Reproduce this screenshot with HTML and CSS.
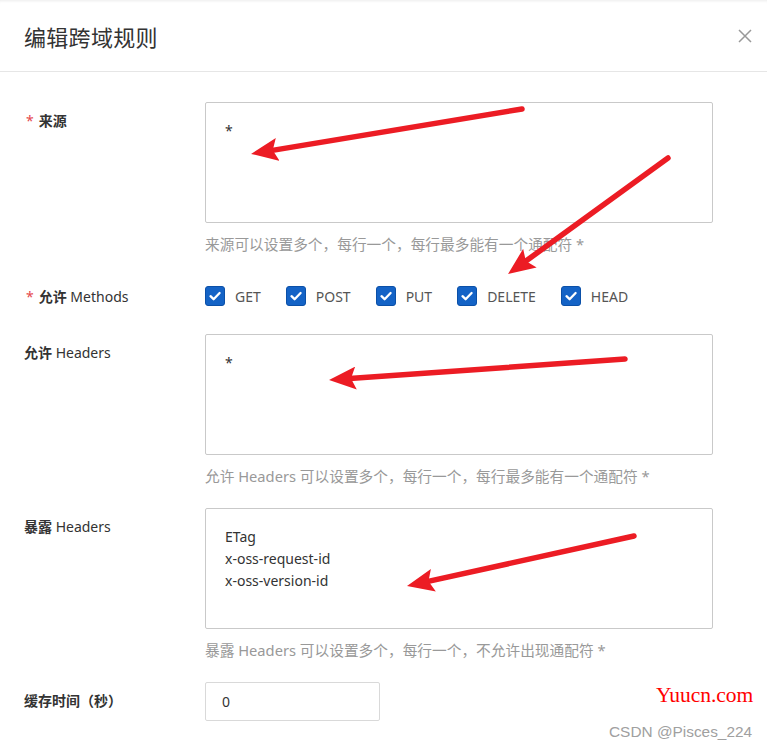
FILE: index.html
```html
<!DOCTYPE html>
<html lang="zh-CN">

<head>
    <meta charset="UTF-8">
    <meta name="viewport" content="width=device-width, initial-scale=1.0">
    <title>编辑跨域规则</title>
    <link rel="stylesheet" href="styles.css">
</head>

<body>
    <div class="dialog">
        <div class="dialog-header">
            <h2>编辑跨域规则</h2>
            <button class="close" aria-label="关闭">
                <svg width="14" height="14" viewBox="0 0 14 14">
                    <path d="M1 1 L13 13 M13 1 L1 13" stroke="#999" stroke-width="1.5" fill="none" />
                </svg>
            </button>
        </div>

        <div class="dialog-body">
            <!-- 来源 -->
            <div class="form-row">
                <div class="form-label"><span class="req">*</span><b>来源</b></div>
                <div class="form-control">
                    <textarea class="area">*</textarea>
                    <div class="help">来源可以设置多个，每行一个，每行最多能有一个通配符 *</div>
                </div>
            </div>

            <!-- 方法 -->
            <div class="form-row row-methods">
                <div class="form-label"><span class="req">*</span><b>允许</b> Methods</div>
                <div class="form-control methods">
                    <label class="check"><span class="box"><svg width="20" height="20" viewBox="0 0 20 20"><path d="M5.5 10.2 L8.6 13.2 L14.6 7" /></svg></span>GET</label>
                    <label class="check"><span class="box"><svg width="20" height="20" viewBox="0 0 20 20"><path d="M5.5 10.2 L8.6 13.2 L14.6 7" /></svg></span>POST</label>
                    <label class="check"><span class="box"><svg width="20" height="20" viewBox="0 0 20 20"><path d="M5.5 10.2 L8.6 13.2 L14.6 7" /></svg></span>PUT</label>
                    <label class="check"><span class="box"><svg width="20" height="20" viewBox="0 0 20 20"><path d="M5.5 10.2 L8.6 13.2 L14.6 7" /></svg></span>DELETE</label>
                    <label class="check"><span class="box"><svg width="20" height="20" viewBox="0 0 20 20"><path d="M5.5 10.2 L8.6 13.2 L14.6 7" /></svg></span>HEAD</label>
                </div>
            </div>

            <!-- 允许 Headers -->
            <div class="form-row">
                <div class="form-label"><b>允许</b> Headers</div>
                <div class="form-control">
                    <textarea class="area">*</textarea>
                    <div class="help">允许 Headers 可以设置多个，每行一个，每行最多能有一个通配符 *</div>
                </div>
            </div>

            <!-- 暴露 Headers -->
            <div class="form-row">
                <div class="form-label"><b>暴露</b> Headers</div>
                <div class="form-control">
                    <textarea class="area">ETag
x-oss-request-id
x-oss-version-id</textarea>
                    <div class="help">暴露 Headers 可以设置多个，每行一个，不允许出现通配符 *</div>
                </div>
            </div>

            <!-- 缓存时间 -->
            <div class="form-row">
                <div class="form-label"><b>缓存时间（秒）</b></div>
                <div class="form-control">
                    <input class="num" type="text" value="0">
                </div>
            </div>
        </div>
    </div>

    <!-- 标注箭头 -->
    <svg class="arrows" width="767" height="750" viewBox="0 0 767 750">
        <defs>
            <marker id="head" markerUnits="userSpaceOnUse" markerWidth="27" markerHeight="23" refX="10" refY="11.5" orient="auto">
                <path d="M0 0 L27 11.5 L0 23 L5 11.5 Z" fill="#ec1c24" />
            </marker>
        </defs>
        <line x1="522" y1="109" x2="267.8" y2="151.1" />
        <line x1="668" y1="158" x2="521.8" y2="264" />
        <line x1="625" y1="359" x2="346" y2="378.8" />
        <line x1="634" y1="536" x2="423.6" y2="582.4" />
    </svg>

    <div class="mark-site">Yuucn.com</div>
    <div class="mark-csdn">CSDN @Pisces_224</div>
</body>

</html>
```

FILE: styles.css
```css
/* 弹窗基础样式 */
body {
    margin: 0;
    background-color: #ffffff;
    font-family: "Noto Sans", "Noto Sans CJK SC", sans-serif;
    color: #333333;
    position: relative;
    width: 767px;
    height: 750px;
    overflow: hidden;
}

.dialog {
    box-shadow: inset 0 3px 3px -2px rgba(0, 0, 0, 0.08);
}

.dialog-header {
    height: 71px;
    border-bottom: 1px solid #e6e6e6;
    display: flex;
    align-items: center;
    justify-content: space-between;
    padding: 0 15px 0 24px;
}

.dialog-header h2 {
    margin: 0;
    font-size: 22px;
    font-weight: 400;
    color: #333333;
    letter-spacing: 0.3px;
}

.close {
    border: none;
    background: none;
    padding: 0;
    width: 14px;
    height: 14px;
    display: flex;
}

.dialog-body {
    padding: 30px 54px 0 24px;
}

.form-row {
    display: grid;
    grid-template-columns: 181px 508px;
    margin-bottom: 22px;
}

.form-row:first-child {
    margin-bottom: 24px;
}

.row-methods {
    margin-bottom: 20px;
}

.form-label {
    font-size: 14px;
    line-height: 20px;
    padding-top: 9px;
    color: #333333;
}

.form-label b {
    font-weight: 700;
}

.req {
    color: #e5484d;
    margin: 0 5px 0 2px;
}

.area {
    display: block;
    box-sizing: border-box;
    width: 508px;
    height: 121px;
    border: 1px solid #c9c9c9;
    border-radius: 2px;
    padding: 17px 20px 17px 19px;
    font-family: "Noto Sans", "Noto Sans CJK SC", sans-serif;
    font-size: 14px;
    line-height: 22px;
    color: #333333;
    resize: none;
    overflow: hidden;
    outline: none;
}

.help {
    margin-top: 11px;
    font-size: 14.7px;
    line-height: 20px;
    color: #999999;
}

.methods {
    display: flex;
    align-items: center;
    height: 36px;
}

.check {
    display: flex;
    align-items: center;
    font-size: 14px;
    color: #555555;
    margin-right: 25px;
}

.box {
    width: 20px;
    height: 20px;
    box-sizing: border-box;
    background-color: #1463c6;
    border: 1px solid #0b50a8;
    border-radius: 3px;
    margin-right: 10px;
    display: flex;
    align-items: center;
    justify-content: center;
}

.box svg {
    margin: -1px;
}

.box path {
    fill: none;
    stroke: #ffffff;
    stroke-width: 2.3;
    stroke-linecap: round;
    stroke-linejoin: round;
}

.num {
    display: block;
    box-sizing: border-box;
    width: 175px;
    height: 39px;
    border: 1px solid #d9d9d9;
    border-radius: 2px;
    padding: 0 16px;
    font-family: "Noto Sans", "Noto Sans CJK SC", sans-serif;
    font-size: 14px;
    color: #333333;
    outline: none;
}

/* 红色标注箭头 */
.arrows {
    position: absolute;
    top: 0;
    left: 0;
    pointer-events: none;
}

.arrows line {
    stroke: #ec1c24;
    stroke-width: 5.5;
    stroke-linecap: round;
    marker-end: url(#head);
}

/* 水印 */
.mark-site {
    position: absolute;
    left: 656px;
    top: 683px;
    font-family: "Liberation Serif", serif;
    font-size: 21.5px;
    color: #ff0000;
}

.mark-csdn {
    position: absolute;
    left: 609px;
    top: 723px;
    font-family: "Liberation Sans", sans-serif;
    font-size: 15.4px;
    color: #a0a0a0;
}
```
